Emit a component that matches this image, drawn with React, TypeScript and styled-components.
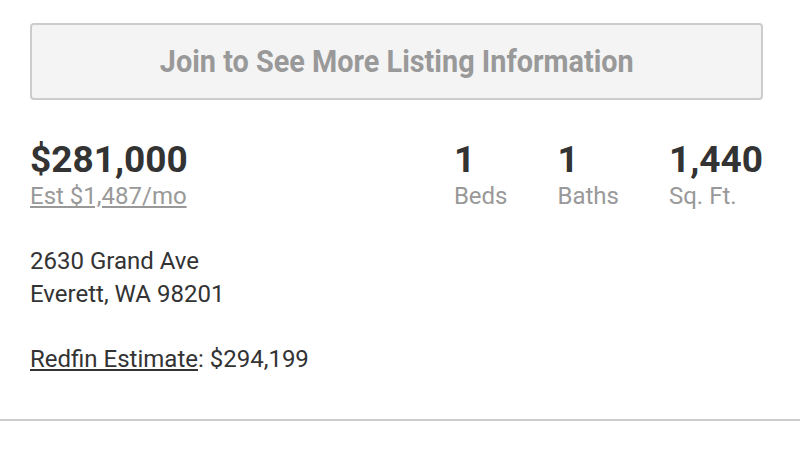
import React from "react";
import styled, { createGlobalStyle } from "styled-components";

const Global = createGlobalStyle`
  html, body { margin: 0; padding: 0; background: #fff; }
  body { font-family: Roboto, "Liberation Sans", sans-serif; color: #333; }
`;

const Page = styled.div`
  width: 800px;
  height: 450px;
  display: flex;
  flex-direction: column;
`;

const Content = styled.div`
  padding: 23px 37px 0 30px;
  display: flex;
  flex-direction: column;
`;

const JoinButton = styled.button`
  box-sizing: border-box;
  height: 77px;
  width: 100%;
  border: 2px solid #cccccc;
  border-radius: 4px;
  background: #f4f4f4;
  display: flex;
  align-items: center;
  justify-content: center;
  padding: 0;
  cursor: pointer;
`;

const JoinLabel = styled.span`
  display: inline-block;
  font-family: Roboto, "Liberation Sans", sans-serif;
  font-weight: 700;
  font-size: 31px;
  color: #999;
  transform: scaleX(0.93);
  white-space: nowrap;
`;

const StatsRow = styled.div`
  margin-top: 40px;
  display: flex;
  justify-content: space-between;
  align-items: flex-start;
`;

const PriceBlock = styled.div`
  display: flex;
  flex-direction: column;
`;

const BigNumber = styled.div`
  font-weight: 700;
  font-size: 37px;
  line-height: 40px;
  color: #333;
`;

const EstLink = styled.a`
  font-size: 24px;
  line-height: 32px;
  color: #999;
  text-decoration: underline;
`;

const Stats = styled.div`
  display: flex;
  gap: 50px;
`;

const Stat = styled.div`
  display: flex;
  flex-direction: column;
`;

const StatLabel = styled.div`
  font-size: 24px;
  line-height: 32px;
  color: #999;
`;

const Address = styled.div`
  margin-top: 33px;
  font-size: 24px;
  line-height: 33px;
  color: #333;
`;

const Estimate = styled.div`
  margin-top: 32px;
  font-size: 24px;
  line-height: 33px;
  color: #333;
`;

const Underlined = styled.span`
  text-decoration: underline;
`;

const Divider = styled.hr`
  margin: 43px 0 0 0;
  border: none;
  border-top: 2px solid #cccccc;
  width: 100%;
`;

export default function App() {
  return (
    <>
      <Global />
      <Page>
        <Content>
          <JoinButton>
            <JoinLabel>Join to See More Listing Information</JoinLabel>
          </JoinButton>
          <StatsRow>
            <PriceBlock>
              <BigNumber>$281,000</BigNumber>
              <EstLink>Est $1,487/mo</EstLink>
            </PriceBlock>
            <Stats>
              <Stat>
                <BigNumber>1</BigNumber>
                <StatLabel>Beds</StatLabel>
              </Stat>
              <Stat>
                <BigNumber>1</BigNumber>
                <StatLabel>Baths</StatLabel>
              </Stat>
              <Stat>
                <BigNumber>1,440</BigNumber>
                <StatLabel>Sq. Ft.</StatLabel>
              </Stat>
            </Stats>
          </StatsRow>
          <Address>
            2630 Grand Ave
            <br />
            Everett, WA 98201
          </Address>
          <Estimate>
            <Underlined>Redfin Estimate</Underlined>: $294,199
          </Estimate>
        </Content>
        <Divider />
      </Page>
    </>
  );
}
